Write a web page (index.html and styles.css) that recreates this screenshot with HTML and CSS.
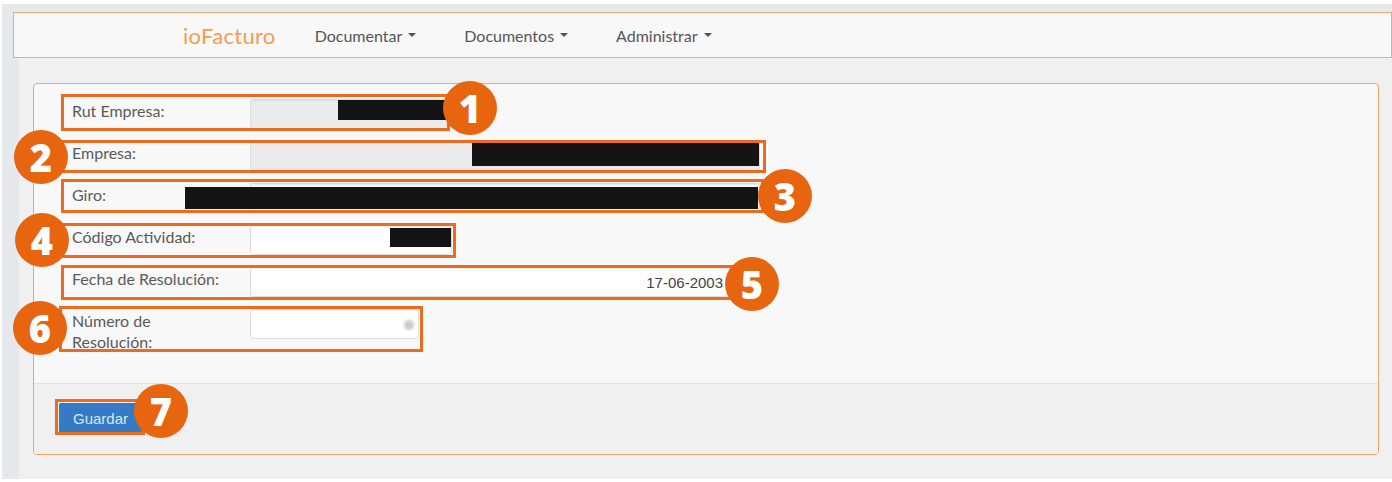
FILE: index.html
```html
<!DOCTYPE html>
<html lang="es">
<head>
    <meta charset="UTF-8">
    <meta name="viewport" content="width=device-width, initial-scale=1.0">
    <title>ioFacturo - Empresa</title>
    <link rel="stylesheet" href="styles.css">
</head>
<body>

<div class="shot">
    <div class="frame">

        <!-- Navbar -->
        <nav class="navbar">
            <a class="brand" href="#">ioFacturo</a>
            <a class="nav-link" href="#">Documentar <span class="caret"></span></a>
            <a class="nav-link" href="#">Documentos <span class="caret"></span></a>
            <a class="nav-link" href="#">Administrar <span class="caret"></span></a>
        </nav>

        <!-- Datos empresa -->
        <div class="panel">
            <form class="panel-body" id="empresa-form">
                <div class="form-row">
                    <label for="rut">Rut Empresa:</label>
                    <input type="text" id="rut" class="field field-rut" readonly>
                </div>
                <div class="form-row">
                    <label for="empresa">Empresa:</label>
                    <input type="text" id="empresa" class="field field-wide" readonly>
                </div>
                <div class="form-row">
                    <label for="giro">Giro:</label>
                    <input type="text" id="giro" class="field field-wide field-plain">
                </div>
                <div class="form-row">
                    <label for="actividad">Código Actividad:</label>
                    <input type="text" id="actividad" class="field field-code">
                </div>
                <div class="form-row">
                    <label for="fecha">Fecha de Resolución:</label>
                    <input type="text" id="fecha" class="field field-date" value="17-06-2003">
                </div>
                <div class="form-row">
                    <label for="numero">Número de Resolución:</label>
                    <input type="text" id="numero" class="field field-num">
                </div>
            </form>
            <div class="panel-footer">
                <button type="submit" form="empresa-form" class="btn-primary">Guardar</button>
            </div>
        </div>
    </div>

    <!-- Redacciones -->
    <div class="redact r-1"></div>
    <div class="redact r-2"></div>
    <div class="redact r-3"></div>
    <div class="redact r-4"></div>

    <!-- Marcas -->
    <div class="mark-box b-1"></div>
    <div class="mark-box b-2"></div>
    <div class="mark-box b-3"></div>
    <div class="mark-box b-4"></div>
    <div class="mark-box b-5"></div>
    <div class="mark-box b-6"></div>
    <div class="mark-box b-7"></div>

    <div class="mark-num n-1">1</div>
    <div class="mark-num n-2">2</div>
    <div class="mark-num n-3">3</div>
    <div class="mark-num n-4">4</div>
    <div class="mark-num n-5">5</div>
    <div class="mark-num n-6">6</div>
    <div class="mark-num n-7">7</div>
</div>

</body>
</html>
```

FILE: styles.css
```css
* {
    margin: 0;
    padding: 0;
    box-sizing: border-box;
}

body {
    font-family: Lato, "Liberation Sans", sans-serif;
    background-color: #fff;
    color: #555;
}

.shot {
    position: relative;
    width: 1392px;
    height: 482px;
    overflow: hidden;
}

.frame {
    margin: 4px 0 0 2px;
    height: 475px;
    background-color: #f0f0f0;
    border-top: 8px solid #e6e9ec;
    border-left: 17px solid #e6e9ec;
}

/* Navbar */
.navbar {
    display: flex;
    align-items: center;
    margin-left: -6px;
    height: 46px;
    padding-left: 169px;
    background-color: #f8f8f8;
    border: 1px solid #f2aa70;
}

.navbar a {
    text-decoration: none;
}

.brand {
    font-size: 22px;
    font-weight: 400;
    letter-spacing: 0.3px;
    color: #f39c50;
    margin-right: 39px;
}

.nav-link {
    display: flex;
    align-items: center;
    font-size: 16px;
    color: #555;
    margin-right: 48px;
}

.caret {
    display: inline-block;
    margin-left: 6px;
    border-top: 4px solid #555;
    border-left: 4px solid transparent;
    border-right: 4px solid transparent;
}

/* Panel */
.panel {
    margin: 25px 13px 0 14px;
    background-color: #f8f8f8;
    border: 1px solid #f3a468;
    border-radius: 4px;
    overflow: hidden;
}

.panel-body {
    padding: 15px 0 31px 38px;
}

.form-row {
    display: flex;
    align-items: flex-start;
    margin-bottom: 12px;
}

.form-row:last-child {
    margin-bottom: 0;
}

.form-row label {
    width: 150px;
    margin-right: 28px;
    padding-top: 1px;
    font-size: 16px;
    line-height: 21px;
    color: #5a5a5a;
}

.field {
    height: 30px;
    padding: 0 6px;
    font-family: "Liberation Sans", Arial, sans-serif;
    font-size: 15px;
    color: #444;
    background-color: #fff;
    border: 1px solid #ddd;
    border-radius: 3px;
    box-shadow: inset 0 1px 1px rgba(0, 0, 0, 0.06);
}

.field[readonly] {
    background-color: #ebebeb;
}

.field-rut {
    width: 197px;
}

.field-wide {
    width: 510px;
}

.field-plain {
    background-color: #f8f8f8;
}

.field-code {
    width: 202px;
}

.field-date {
    width: 480px;
    text-align: right;
}

.field-num {
    width: 169px;
    background: #fff radial-gradient(circle at 158px 15px, #c8c8c8 0, #cfcfcf 3px, rgba(255, 255, 255, 0) 7px);
}

.panel-footer {
    padding: 19px 0 21px 25px;
    background-color: #f0f0f0;
    border-top: 1px solid #e2e2e2;
}

.btn-primary {
    display: block;
    height: 30px;
    padding: 0 14px;
    font-family: "Liberation Sans", Arial, sans-serif;
    font-size: 15px;
    color: #dbe6f3;
    background-color: #357ac6;
    border: none;
    border-radius: 2px;
    cursor: pointer;
}

/* Redacciones y marcas */
.redact {
    position: absolute;
    background-color: #141414;
}

.r-1 { left: 338px; top: 100px; width: 113px; height: 20px; }
.r-2 { left: 472px; top: 143px; width: 287px; height: 23px; }
.r-3 { left: 185px; top: 187px; width: 573px; height: 22px; }
.r-4 { left: 390px; top: 228px; width: 61px; height: 19px; }

.mark-box {
    position: absolute;
    border: 3px solid #ee6a1e;
}

.b-1 { left: 61px; top: 94px; width: 389px; height: 37px; }
.b-2 { left: 61px; top: 140px; width: 705px; height: 33px; }
.b-3 { left: 61px; top: 179px; width: 703px; height: 34px; }
.b-4 { left: 61px; top: 223px; width: 395px; height: 35px; }
.b-5 { left: 61px; top: 265px; width: 675px; height: 35px; }
.b-6 { left: 59px; top: 306px; width: 364px; height: 46px; }
.b-7 { left: 55px; top: 399px; width: 90px; height: 36px; }

.mark-num {
    position: absolute;
    width: 54px;
    height: 54px;
    display: flex;
    align-items: center;
    justify-content: center;
    border-radius: 50%;
    background-color: #e8650f;
    color: #fff;
    font-family: "Open Sans", sans-serif;
    font-weight: 800;
    font-size: 38px;
    line-height: 1;
}

.n-1 { left: 443px; top: 81px; }
.n-2 { left: 14px; top: 130px; }
.n-3 { left: 758px; top: 169px; }
.n-4 { left: 15px; top: 213px; }
.n-5 { left: 725px; top: 257px; }
.n-6 { left: 13px; top: 301px; }
.n-7 { left: 134px; top: 384px; }
```
